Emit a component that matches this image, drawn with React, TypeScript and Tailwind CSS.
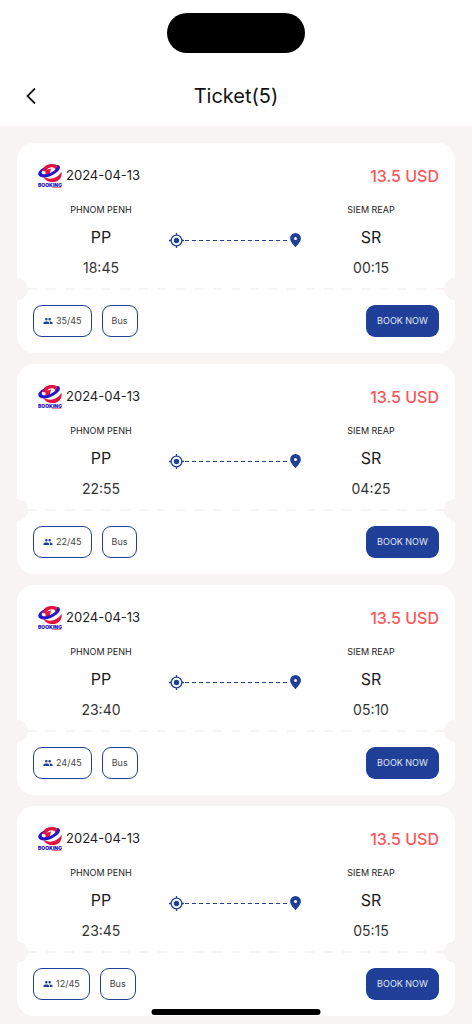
import { MdPeople } from "react-icons/md";

type Ticket = {
  id: number;
  date: string;
  price: string;
  departure: string;
  arrival: string;
  seats: string;
};

const tickets: Ticket[] = [
  { id: 1, date: "2024-04-13", price: "13.5 USD", departure: "18:45", arrival: "00:15", seats: "35/45" },
  { id: 2, date: "2024-04-13", price: "13.5 USD", departure: "22:55", arrival: "04:25", seats: "22/45" },
  { id: 3, date: "2024-04-13", price: "13.5 USD", departure: "23:40", arrival: "05:10", seats: "24/45" },
  { id: 4, date: "2024-04-13", price: "13.5 USD", departure: "23:45", arrival: "05:15", seats: "12/45" },
];

function Logo() {
  return (
    <svg viewBox="0 0 48 48" className="h-6 w-6" role="img" aria-label="Booking">
      <path
        d="M8 14C11 4 20-1 30 0c9 1 13 6 12 12l-7 1c1-5-5-8-10-6-5 1-8 4-9 8z"
        fill="#e3123f"
      />
      <path d="M15 12l11-3-3 13-8 2z" fill="#e3123f" />
      <path
        d="M11 25c5 4 13 6 21 3 6-2 11-6 15-12 2 11-6 20-17 20-10 0-17-4-19-11z"
        fill="#e3123f"
      />
      <path
        d="M14 7C5 9-1 17 1 22c3 7 19 6 30-1 10-6 15-12 12-17 -1-2-3-2-5-2 2 5-3 10-10 14-8 5-17 6-20 3-2-3 1-8 6-12z"
        fill="#2414c8"
      />
      <text
        x="24"
        y="45"
        textAnchor="middle"
        fontSize="10"
        fontWeight="900"
        fill="#2414c8"
        fontFamily="Inter, sans-serif"
      >
        BOOKING
      </text>
      <path d="M28 47h19" stroke="#f58a9d" strokeWidth="2" />
    </svg>
  );
}

function OriginIcon() {
  return (
    <svg viewBox="0 0 15 15" className="size-[15px] shrink-0" fill="none" stroke="currentColor" aria-hidden="true">
      <circle cx="7.5" cy="7.5" r="5.4" strokeWidth="1.3" />
      <circle cx="7.5" cy="7.5" r="2.7" fill="currentColor" stroke="none" />
      <path d="M7.5 0v2M7.5 13v2M0 7.5h2M13 7.5h2" strokeWidth="1.3" />
    </svg>
  );
}

function PinIcon() {
  return (
    <svg viewBox="0 0 11 14" className="mr-[3px] h-3.5 w-[11px] shrink-0" aria-hidden="true">
      <path
        d="M5.5 0A5.4 5.4 0 0 0 .1 5.4C.1 9 5.5 14 5.5 14s5.4-5 5.4-8.6A5.4 5.4 0 0 0 5.5 0z"
        fill="currentColor"
      />
      <circle cx="5.5" cy="5.4" r="1.5" fill="white" />
    </svg>
  );
}

function Station({ name, code, time }: { name: string; code: string; time: string }) {
  return (
    <div className="flex w-[134px] shrink-0 flex-col items-center text-[#1c1c1c]">
      <p className="text-[9px] leading-3">{name}</p>
      <p className="mt-[9px] text-base leading-6">{code}</p>
      <p className="mt-[9px] text-sm leading-5 text-[#333333]">{time}</p>
    </div>
  );
}

function TicketCard({ ticket }: { ticket: Ticket }) {
  return (
    <li className="rounded-[17px] bg-white pt-[21px] pb-4">
      <div className="flex h-6 items-center justify-between pr-4 pl-[21px]">
        <div className="flex items-center gap-1">
          <Logo />
          <span className="text-[13px] text-[#1c1c1c]">{ticket.date}</span>
        </div>
        <span className="text-base font-medium text-[#fb5558]">{ticket.price}</span>
      </div>

      <div className="mt-4 flex px-[17px]">
        <Station name="PHNOM PENH" code="PP" time={ticket.departure} />
        <div className="mt-7 flex h-4 min-w-0 flex-1 items-center pl-px text-[#1f3f98]">
          <OriginIcon />
          <svg className="mr-[3px] ml-px h-px w-0 flex-1" aria-hidden="true">
            <line x1="0" y1="0" x2="100%" y2="0" stroke="currentColor" strokeWidth="2" strokeDasharray="4 3" />
          </svg>
          <PinIcon />
        </div>
        <Station name="SIEM REAP" code="SR" time={ticket.arrival} />
      </div>

      <div className="flex h-[22px] items-center">
        <div className="h-full w-[11px] rounded-r-full bg-[#f8f4f4]" />
        <svg className="h-0.5 w-0 flex-1" aria-hidden="true">
          <line x1="0" y1="1" x2="100%" y2="1" stroke="#f8f4f4" strokeWidth="2" strokeDasharray="9 9.5" />
        </svg>
        <div className="h-full w-[11px] rounded-l-full bg-[#f8f4f4]" />
      </div>

      <div className="mt-[5px] flex items-center px-4">
        <div className="flex h-8 items-center gap-[3px] rounded-[9px] border border-[#1f3f98] px-[9px] text-[9px] text-[#444444]">
          <MdPeople size={10} className="text-[#1f3f98]" />
          {ticket.seats}
        </div>
        <div className="ml-2.5 flex h-8 items-center rounded-[9px] border border-[#1f3f98] px-[9px] text-[9px] text-[#444444]">
          Bus
        </div>
        <button className="ml-auto h-8 w-[73px] rounded-[9px] bg-[#1f3f98] text-[9px] text-[#e4e8f4]">
          BOOK NOW
        </button>
      </div>
    </li>
  );
}

export default function App() {
  return (
    <div className="min-h-screen bg-[#f8f4f4] font-['Inter',sans-serif]">
      <header className="bg-white pt-[13px]">
        <div className="mx-auto h-10 w-[138px] rounded-full bg-black" />
        <div className="mt-[13px] grid h-[60px] grid-cols-[1fr_auto_1fr] items-center px-5">
          <button aria-label="Back" className="flex h-6 w-6 items-center justify-center text-[#1c1c1c]">
            <svg viewBox="0 0 24 24" className="h-6 w-6" fill="none" stroke="currentColor" strokeWidth="1.8">
              <path d="M15 4.5L7.5 12l7.5 7.5" />
            </svg>
          </button>
          <h1 className="text-xl text-[#111111]">Ticket(5)</h1>
        </div>
      </header>

      <main className="px-[17px] pt-[17px] pb-2">
        <ul className="flex flex-col gap-[11px]">
          {tickets.map((ticket) => (
            <TicketCard key={ticket.id} ticket={ticket} />
          ))}
        </ul>
      </main>

      {/* home indicator */}
      <div className="fixed bottom-[9px] left-1/2 h-1.5 w-[169px] -translate-x-1/2 rounded-full bg-black" />
    </div>
  );
}
